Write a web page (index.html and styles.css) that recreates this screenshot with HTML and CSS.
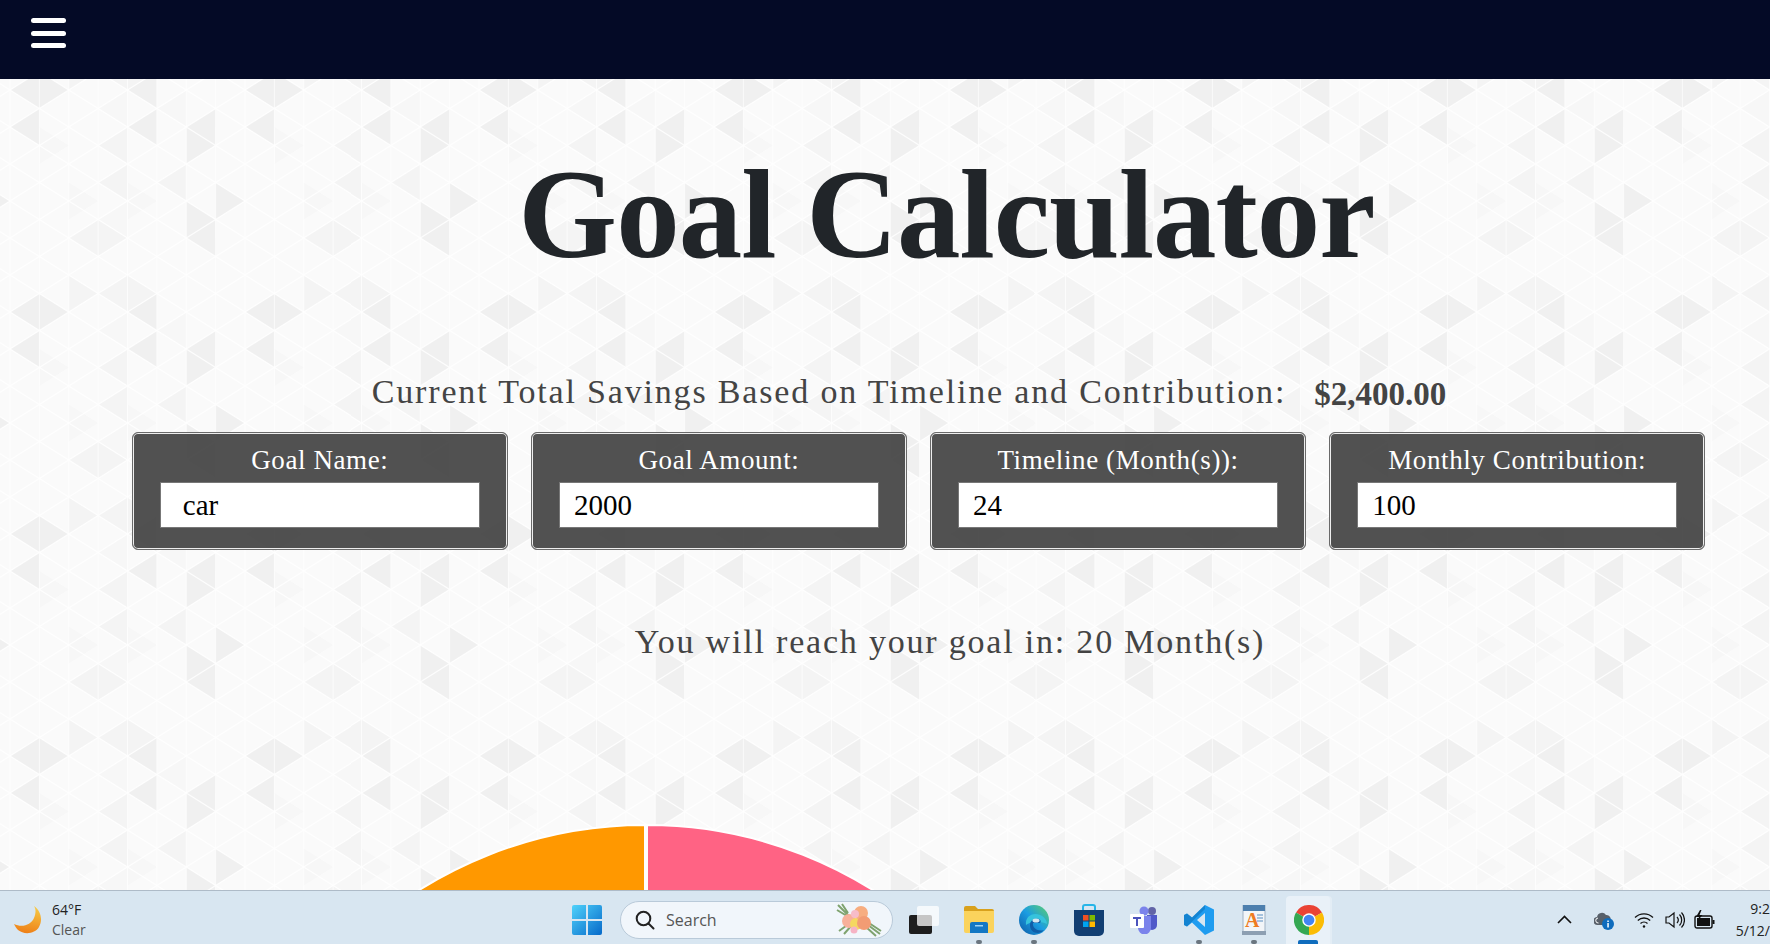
FILE: index.html
```html
<!DOCTYPE html>
<html lang="en">
<head>
  <meta charset="UTF-8" />
  <meta name="viewport" content="width=device-width, initial-scale=1.0"/>
  <title>Goal Calculator</title>
  <link rel="stylesheet" href="styles.css">
</head>
<body>

  <header class="topbar">
    <button class="menu-btn" aria-label="Menu"><span></span><span></span><span></span></button>
  </header>

  <main class="page">
    <h1 class="title">Goal Calculator</h1>

    <div class="savings">
      <span class="savings-label">Current Total Savings Based on Timeline and Contribution:</span>
      <span class="savings-value">$2,400.00</span>
    </div>

    <div class="fields">
      <div class="field">
        <label>Goal Name:</label>
        <input class="name-input" type="text" value="car">
      </div>
      <div class="field">
        <label>Goal Amount:</label>
        <input type="text" value="2000">
      </div>
      <div class="field">
        <label>Timeline (Month(s)):</label>
        <input type="text" value="24">
      </div>
      <div class="field">
        <label>Monthly Contribution:</label>
        <input type="text" value="100">
      </div>
    </div>

    <p class="result">You will reach your goal in: 20 Month(s)</p>

    <svg class="chart" width="852" height="852" viewBox="0 0 852 852">
      <path d="M425 2A424 424 0 0 0 425 850Z" fill="#ff9800" stroke="#fff" stroke-width="2"/>
      <path d="M427 2A424 424 0 0 1 427 850Z" fill="#ff6384" stroke="#fff" stroke-width="2"/>
    </svg>
  </main>

  <footer class="taskbar">
    <div class="weather">
      <svg width="28" height="29" viewBox="0 0 28 29">
        <defs>
          <linearGradient id="moon" x1="0.6" y1="0" x2="0.4" y2="1">
            <stop offset="0" stop-color="#f6c945"/>
            <stop offset="1" stop-color="#ee7f17"/>
          </linearGradient>
        </defs>
        <path d="M20 1C27 6 29 15 25 22C21 29 10 30 4 25C2 23 1 21 0 19C8 23 17 20 20 13C22 8 22 4 20 1Z" fill="url(#moon)"/>
      </svg>
      <div class="weather-text">
        <span class="temp">64°F</span>
        <span class="sky">Clear</span>
      </div>
    </div>

    <div class="start">
      <svg width="30" height="30" viewBox="0 0 30 30">
        <defs>
          <linearGradient id="win" x1="0" y1="0" x2="1" y2="1">
            <stop offset="0" stop-color="#4fd2fb"/>
            <stop offset="1" stop-color="#0669c9"/>
          </linearGradient>
        </defs>
        <path d="M2 0H14V14H0V2A2 2 0 0 1 2 0ZM16 0H28A2 2 0 0 1 30 2V14H16ZM0 16H14V30H2A2 2 0 0 1 0 28ZM16 16H30V28A2 2 0 0 1 28 30H16Z" fill="url(#win)"/>
      </svg>
    </div>

    <div class="search">
      <svg width="20" height="20" viewBox="0 0 20 20" fill="none" stroke="#222" stroke-width="2">
        <circle cx="8.5" cy="8.5" r="6.8"/>
        <path d="M13.5 13.5L18.5 18.5" stroke-linecap="round"/>
      </svg>
      <span class="search-text">Search</span>
      <svg class="bouquet" width="46" height="34" viewBox="0 0 46 34">
        <path d="M2 2L14 14M6 1L12 10M1 7L11 13M3 28L14 20M8 31L16 22M32 22L44 31M30 24L40 33M33 20L45 28" stroke="#7fa36f" stroke-width="2" fill="none"/>
        <circle cx="13" cy="18" r="7" fill="#f8b09a"/>
        <circle cx="20" cy="21" r="6" fill="#f5d860"/>
        <circle cx="25" cy="10" r="7" fill="#f7ad80"/>
        <circle cx="28" cy="20" r="7" fill="#f29c74"/>
        <circle cx="19" cy="11" r="4" fill="#f7bcc9"/>
        <circle cx="18" cy="27" r="3.5" fill="#f6b3c4"/>
      </svg>
    </div>

    <div class="apps">
      <div class="app">
        <svg width="30" height="28" viewBox="0 0 30 28">
          <rect x="0" y="9" width="23" height="19" rx="2" fill="#1d1d1d"/>
          <rect x="8" y="0" width="22" height="20" rx="2" fill="#fff" fill-opacity=".75"/>
        </svg>
      </div>
      <div class="app running">
        <svg width="30" height="27" viewBox="0 0 30 27">
          <path d="M0 2A2 2 0 0 1 2 0H11L14 3H28A2 2 0 0 1 30 5V8H0Z" fill="#d9a11c"/>
          <path d="M0 5H30V25A2 2 0 0 1 28 27H2A2 2 0 0 1 0 25Z" fill="#fbd35c"/>
          <path d="M6 18A2 2 0 0 1 8 16H22A2 2 0 0 1 24 18V27H6Z" fill="#1478c4"/>
          <rect x="11" y="19" width="8" height="1.5" fill="#9ed4f5"/>
        </svg>
      </div>
      <div class="app running">
        <svg width="30" height="30" viewBox="0 0 30 30">
          <defs>
            <linearGradient id="edge" x1="0" y1="1" x2="1" y2="0">
              <stop offset="0" stop-color="#0c59a4"/>
              <stop offset=".5" stop-color="#1b9de2"/>
              <stop offset="1" stop-color="#5ed16b"/>
            </linearGradient>
          </defs>
          <circle cx="15" cy="15" r="15" fill="url(#edge)"/>
          <path d="M7 20C6 11 14 7 21 10C26 12 28 16 28 19C24 17 20 17 15 17C11 17 9 19 7 20Z" fill="#36c3dc"/>
          <path d="M11 20C11 15 16 13 20 14C22 15 22 17 21 18H14C13 23 19 27 25 25C21 30 11 29 11 20Z" fill="#0f5ea8"/>
          <ellipse cx="17" cy="15.5" rx="3.5" ry="2" fill="#d4e6f0"/>
        </svg>
      </div>
      <div class="app">
        <svg width="30" height="32" viewBox="0 0 30 32">
          <path d="M9 7V3A2 2 0 0 1 11 1H19A2 2 0 0 1 21 3V7" fill="none" stroke="#27b5e8" stroke-width="2"/>
          <path d="M0 6H30V27A5 5 0 0 1 25 32H5A5 5 0 0 1 0 27Z" fill="#123f73"/>
          <rect x="9" y="11" width="5.5" height="5.5" fill="#f25022"/>
          <rect x="15.5" y="11" width="5.5" height="5.5" fill="#7fba00"/>
          <rect x="9" y="17.5" width="5.5" height="5.5" fill="#00a4ef"/>
          <rect x="15.5" y="17.5" width="5.5" height="5.5" fill="#ffb900"/>
        </svg>
      </div>
      <div class="app">
        <svg width="28" height="28" viewBox="0 0 28 28">
          <circle cx="22" cy="5" r="4" fill="#6264a7"/>
          <circle cx="14" cy="5" r="4.5" fill="#7b83eb"/>
          <path d="M17 9H27V19A5 5 0 0 1 17 19Z" fill="#5059c9"/>
          <path d="M8 10H21V22A6.5 6.5 0 0 1 8 22Z" fill="#7b83eb"/>
          <rect x="0" y="8" width="14" height="14" rx="1" fill="#fff"/>
          <path d="M3 11H11V13H8V20H6V13H3Z" fill="#4b53bc"/>
        </svg>
      </div>
      <div class="app running">
        <svg width="30" height="30" viewBox="0 0 30 30">
          <path d="M21 0L30 4.5V25.5L21 30L8 17.5L3 21.5L0 20V10L3 8.5L8 12.5ZM21 8L13 15L21 22Z" fill="#1f9cf0"/>
          <path d="M21 0L8 12.5L3 8.5L0 10V20L3 21.5L21 4Z" fill="#0a6fb8" fill-opacity=".55"/>
        </svg>
      </div>
      <div class="app running">
        <svg width="24" height="30" viewBox="0 0 24 30">
          <rect x="1" y="0" width="22" height="28" fill="#f2f5f8" stroke="#9fb1c4"/>
          <rect x="1" y="0" width="22" height="6" fill="#4d7fae"/>
          <rect x="0" y="26" width="24" height="4" fill="#8d9fb2"/>
          <text class="word-a" x="3" y="22">A</text>
          <path d="M15 10H21M15 13H21M15 16H21" stroke="#5b8fc2" stroke-width="1"/>
        </svg>
      </div>
      <div class="app active">
        <svg width="30" height="30" viewBox="0 0 24 24">
          <path d="M12 12L1.6 6A12 12 0 0 1 22.4 6Z" fill="#ea4335"/>
          <path d="M12 12L12 24A12 12 0 0 1 1.6 6Z" fill="#34a853"/>
          <path d="M12 12L22.4 6A12 12 0 0 1 12 24Z" fill="#fbbc05"/>
          <circle cx="12" cy="12" r="5.4" fill="#fff"/>
          <circle cx="12" cy="12" r="4.3" fill="#4285f4"/>
        </svg>
      </div>
    </div>

    <div class="tray">
      <svg class="tray-chevron" width="15" height="9" viewBox="0 0 15 9" fill="none" stroke="#111" stroke-width="1.6">
        <path d="M1 8L7.5 1.5L14 8"/>
      </svg>
      <svg class="tray-cloud" width="20" height="20" viewBox="0 0 20 20">
        <path d="M4 15A4 4 0 0 1 3 7A5 5 0 0 1 12 5A4 4 0 0 1 16 11V15Z" fill="#58606a"/>
        <path d="M4.5 13A2.5 2.5 0 0 1 4 8" fill="none" stroke="#fff"/>
        <circle cx="14" cy="14" r="6" fill="#0f6cbd"/>
        <rect x="13.3" y="13" width="1.5" height="4.5" fill="#fff"/>
        <rect x="13.3" y="10.5" width="1.5" height="1.5" fill="#fff"/>
      </svg>
      <svg class="tray-wifi" width="20" height="18" viewBox="0 0 20 18" fill="none" stroke="#111" stroke-width="1.3">
        <path d="M1 6.5A13 13 0 0 1 19 6.5M3.8 9.5A9 9 0 0 1 16.2 9.5M6.5 12.5A5 5 0 0 1 13.5 12.5"/>
        <circle cx="10" cy="15.5" r="1.2" fill="#111" stroke="none"/>
      </svg>
      <svg class="tray-sound" width="20" height="18" viewBox="0 0 20 18" fill="none" stroke="#111" stroke-width="1.2">
        <path d="M1 6H4L9 2V16L4 12H1Z"/>
        <path d="M12 6A4.5 4.5 0 0 1 12 12M14.5 3.5A8 8 0 0 1 14.5 14.5M16.5 1.5A11 11 0 0 1 16.5 16.5"/>
      </svg>
      <svg class="tray-battery" width="21" height="20" viewBox="0 0 21 20">
        <path d="M6 0L2 7H5L3.5 11L8.5 5H5.5L7.5 0Z" fill="#111"/>
        <rect x="1" y="6" width="17" height="12" rx="2" fill="none" stroke="#111" stroke-width="1.4"/>
        <rect x="3" y="8" width="13" height="8" fill="#111"/>
        <rect x="18.5" y="10" width="2" height="4" fill="#111"/>
      </svg>
      <div class="clock">
        <span>9:2</span>
        <span>5/12/</span>
      </div>
    </div>
  </footer>

</body>
</html>
```

FILE: styles.css
```css
html, body {
  height: 100%;
}

body {
  margin: 0;
  height: 944px;
  overflow: hidden;
  display: flex;
  flex-direction: column;
  font-family: "Liberation Serif", serif;
  background-color: #fafafa;
  background-image: url("data:image/svg+xml,%3Csvg xmlns='http://www.w3.org/2000/svg' width='704' height='666' viewBox='0 0 704 666'%3E%3Cpath fill='%23f0f0f0' d='M0 111L88 55.5V166.5ZM88 55.5V166.5L176 111ZM352 111L440 55.5V166.5ZM0 222L88 166.5V277.5ZM352 222L440 166.5V277.5ZM528 222L616 166.5V277.5ZM528 222V333L616 277.5ZM616 388.5V499.5L704 444ZM528 444V555L616 499.5ZM528 555L616 499.5V610.5Z'/%3E%3Cpath fill='%23f4f4f4' d='M264 277.5L352 222V333ZM176 555L264 499.5V610.5ZM264 499.5V610.5L352 555ZM176 0V111L264 55.5ZM264 55.5L352 0V111ZM352 0V111L440 55.5ZM264 388.5L352 333V444ZM440 388.5L528 333V444Z'/%3E%3Cpath fill='%23f7f7f7' d='M264 499.5L352 444V555ZM176 388.5V499.5L264 444ZM352 388.5V499.5L440 444ZM88 222V333L176 277.5ZM264 166.5L352 111V222ZM440 166.5L528 111V222Z'/%3E%3Cpath fill='none' stroke='%23fff' stroke-opacity='.85' stroke-width='3.5' d='M0 -444L704 0M0 -333L704 111M0 -222L704 222M0 -111L704 333M0 0L704 444M0 111L704 555M0 222L704 666M0 333L704 777M0 444L704 888M0 555L704 999M0 666L704 1110M0 0L704 -444M0 111L704 -333M0 222L704 -222M0 333L704 -111M0 444L704 0M0 555L704 111M0 666L704 222M0 777L704 333M0 888L704 444M0 999L704 555M0 1110L704 666'/%3E%3Cpath fill='none' stroke='%23fff' stroke-opacity='.7' stroke-width='3' d='M0 0V666M88 0V666M176 0V666M264 0V666M352 0V666M440 0V666M528 0V666M616 0V666M704 0V666'/%3E%3C/svg%3E");
  background-size: 234.67px 222px;
  background-position: 10px 53px;
}

.topbar {
  flex: none;
  height: 79px;
  background-color: #040a26;
}

.menu-btn {
  display: flex;
  flex-direction: column;
  gap: 7.5px;
  width: 35px;
  margin: 18px 0 0 30.5px;
  padding: 0;
  border: none;
  background: none;
}

.menu-btn span {
  display: block;
  height: 5px;
  border-radius: 3px;
  background-color: white;
}

.page {
  flex: 1;
  min-height: 0;
  overflow: hidden;
}

.title {
  margin: 60px 0 0;
  padding-left: 123px;
  font-size: 127px;
  line-height: 150px;
  font-weight: bold;
  letter-spacing: -1px;
  text-align: center;
  color: #212529;
}

.savings {
  display: flex;
  justify-content: center;
  gap: 28px;
  margin-top: 83px;
  padding-left: 48px;
  line-height: 40px;
  color: #444;
}

.savings-label {
  font-size: 34px;
  letter-spacing: 1.83px;
}

.savings-value {
  margin-top: 2px;
  font-size: 33px;
  font-weight: bold;
}

.fields {
  display: flex;
  gap: 23.5px;
  margin: 18px 65px 0 132px;
}

.field {
  flex: 1;
  height: 118px;
  box-sizing: border-box;
  display: flex;
  flex-direction: column;
  align-items: center;
  padding-top: 11px;
  border: 1px solid #6a6a6a;
  border-radius: 6px;
  box-shadow: inset 0 0 0 1px #eee;
  background-color: rgba(68, 68, 68, 0.93);
}

.field label {
  font-size: 27px;
  line-height: 32px;
  letter-spacing: 0.6px;
  color: white;
}

.field input {
  width: 320px;
  height: 46px;
  box-sizing: border-box;
  margin-top: 6px;
  padding: 0 14px;
  border: 1px solid #777;
  font-family: "Liberation Serif", serif;
  font-size: 29px;
  color: black;
  background-color: white;
}

.field .name-input {
  padding-left: 22px;
}

.result {
  margin: 72px 0 0;
  padding-left: 130px;
  font-size: 34px;
  line-height: 40px;
  letter-spacing: 1.8px;
  text-align: center;
  color: #444;
}

.chart {
  display: block;
  margin: 161px 0 0 220px;
}

.taskbar {
  flex: none;
  height: 54px;
  box-sizing: border-box;
  display: flex;
  align-items: center;
  padding-top: 4px;
  border-top: 1px solid #aebbc8;
  background-color: #d8e6f1;
  font-family: "Open Sans", "Noto Sans", sans-serif;
}

.weather {
  display: flex;
  align-items: center;
  gap: 10px;
  width: 572px;
  box-sizing: border-box;
  padding-left: 14px;
}

.weather-text {
  display: flex;
  flex-direction: column;
  font-size: 14px;
  line-height: 20px;
}

.temp {
  color: #222;
}

.sky {
  color: #555;
}

.start {
  display: flex;
  width: 48px;
}

.search {
  width: 273px;
  height: 38px;
  box-sizing: border-box;
  display: flex;
  align-items: center;
  padding: 0 10px 0 14px;
  border: 1px solid #b9cad9;
  border-radius: 19px;
  background-color: #f1f6fb;
}

.search-text {
  flex: 1;
  margin-left: 11px;
  font-size: 16px;
  color: #555;
}

.apps {
  display: flex;
  margin: -4px 0 0 3px;
  align-self: stretch;
}

.app {
  position: relative;
  width: 55px;
  box-sizing: border-box;
  padding-top: 4px;
  display: flex;
  align-items: center;
  justify-content: center;
}

.app.running::after {
  content: "";
  position: absolute;
  left: 50%;
  bottom: 0;
  width: 6px;
  height: 4px;
  margin-left: -3px;
  border-radius: 2px;
  background-color: #6b7680;
}

.app.active::before {
  content: "";
  position: absolute;
  left: 5px;
  right: 6px;
  top: 5px;
  bottom: 0;
  border-radius: 4px 4px 0 0;
  background-color: #e9f1f8;
  box-shadow: 2px 0 0 #e3edf5;
}

.app.active svg {
  position: relative;
}

.app.active::after {
  content: "";
  position: absolute;
  left: 17px;
  width: 20px;
  bottom: 0;
  height: 4px;
  border-radius: 2px 2px 0 0;
  background-color: #0f6cbd;
}

.word-a {
  font-family: "Liberation Serif", serif;
  font-size: 20px;
  font-weight: bold;
  fill: #ee7b22;
}

.tray {
  flex: 1;
  display: flex;
  align-items: center;
  margin-left: 221px;
  min-width: 0;
}

.tray-cloud {
  margin-left: 22px;
}

.tray-wifi {
  margin-left: 20px;
}

.tray-sound {
  margin-left: 11px;
}

.tray-battery {
  margin-left: 9px;
}

.clock {
  flex: 1;
  display: flex;
  flex-direction: column;
  align-items: flex-end;
  font-size: 14px;
  line-height: 22px;
  color: #222;
  white-space: nowrap;
}
```
